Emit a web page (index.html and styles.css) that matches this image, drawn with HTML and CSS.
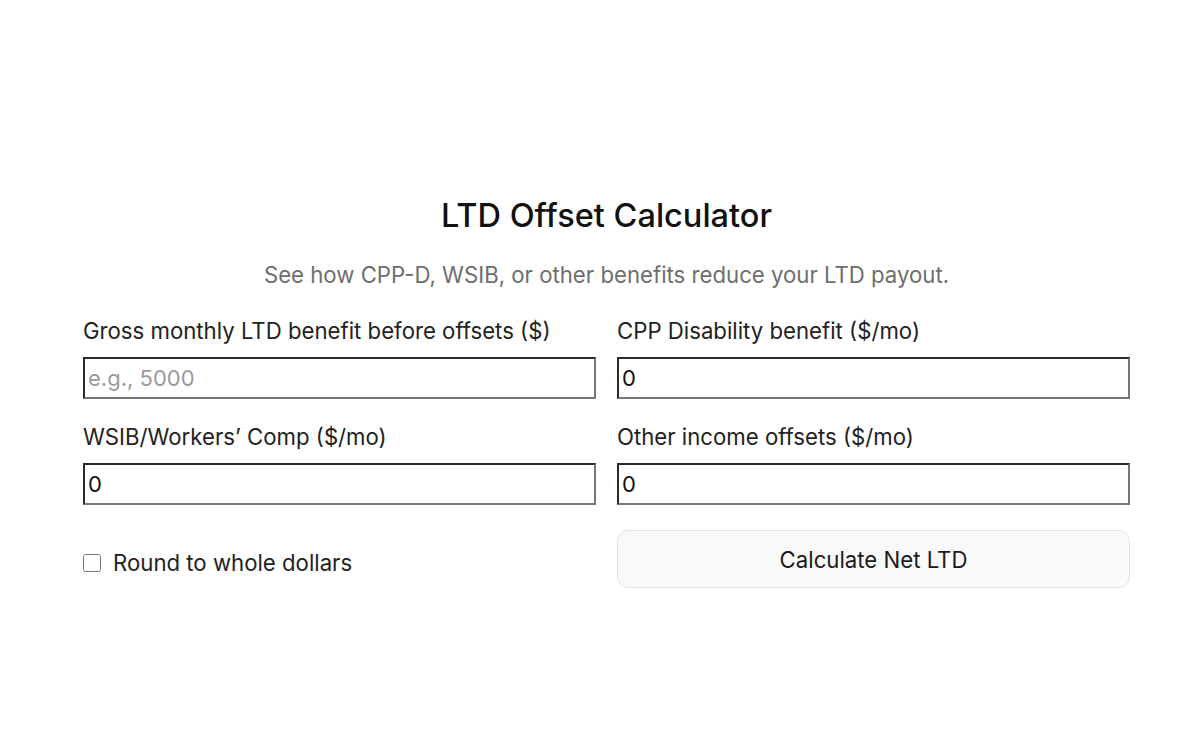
FILE: index.html
```html
<!DOCTYPE html>
<html lang="en">
<head>
<meta charset="utf-8">
<title>LTD Offset Calculator</title>
<link rel="stylesheet" href="styles.css">
</head>
<body>
<main class="calc">
  <h1 class="title">LTD Offset Calculator</h1>
  <p class="subtitle">See how CPP-D, WSIB, or other benefits reduce your LTD payout.</p>
  <div class="grid">
    <label class="field">
      <span class="label">Gross monthly LTD benefit before offsets ($)</span>
      <input class="input" type="text" placeholder="e.g., 5000">
    </label>
    <label class="field">
      <span class="label">CPP Disability benefit ($/mo)</span>
      <input class="input" type="text" value="0">
    </label>
    <label class="field">
      <span class="label">WSIB/Workers’ Comp ($/mo)</span>
      <input class="input" type="text" value="0">
    </label>
    <label class="field">
      <span class="label">Other income offsets ($/mo)</span>
      <input class="input" type="text" value="0">
    </label>
    <label class="check">
      <input class="box" type="checkbox">
      <span>Round to whole dollars</span>
    </label>
    <button class="btn" type="button">Calculate Net LTD</button>
  </div>
</main>
</body>
</html>
```

FILE: styles.css
```css
* { box-sizing: border-box; }
html, body { margin: 0; padding: 0; background: #fff; }
body {
  font-family: Inter, "Noto Sans", sans-serif;
  color: #1a1a1a;
}
.calc {
  width: 1047px;
  margin: 0 0 0 83px;
  padding-top: 196px;
}
.title {
  margin: 0;
  text-align: center;
  font-size: 32.5px;
  font-weight: 500;
  line-height: 40px;
  color: #111;
}
.subtitle {
  margin: 25px 0 0;
  text-align: center;
  font-size: 22.2px;
  line-height: 28px;
  color: #6e6e6e;
}
.grid {
  margin-top: 28px;
  display: grid;
  grid-template-columns: 1fr 1fr;
  column-gap: 21px;
  row-gap: 24px;
}
.field { display: flex; flex-direction: column; gap: 12px; }
.label { font-size: 22.2px; line-height: 28px; color: #222; }
.input {
  height: 42px;
  border: 2px solid #777;
  border-top-color: #2a2a2a;
  border-left-color: #2a2a2a;
  border-radius: 0;
  padding: 0 3px;
  font-family: inherit;
  font-size: 22px;
  color: #111;
  background: #fff;
}
.input::placeholder { color: #9a9a9a; }
.check {
  display: flex;
  align-items: center;
  gap: 12px;
  font-size: 22.2px;
  line-height: 28px;
  color: #222;
  align-self: center;
  margin-top: 9px;
}
.box {
  margin: 0;
  width: 18px;
  height: 18px;
}
.btn {
  margin-top: 1px;
  height: 58px;
  border: 1px solid #e4e4e4;
  border-radius: 11px;
  background: #f9f9f9;
  font-family: inherit;
  font-size: 22.2px;
  color: #1a1a1a;
}
```
